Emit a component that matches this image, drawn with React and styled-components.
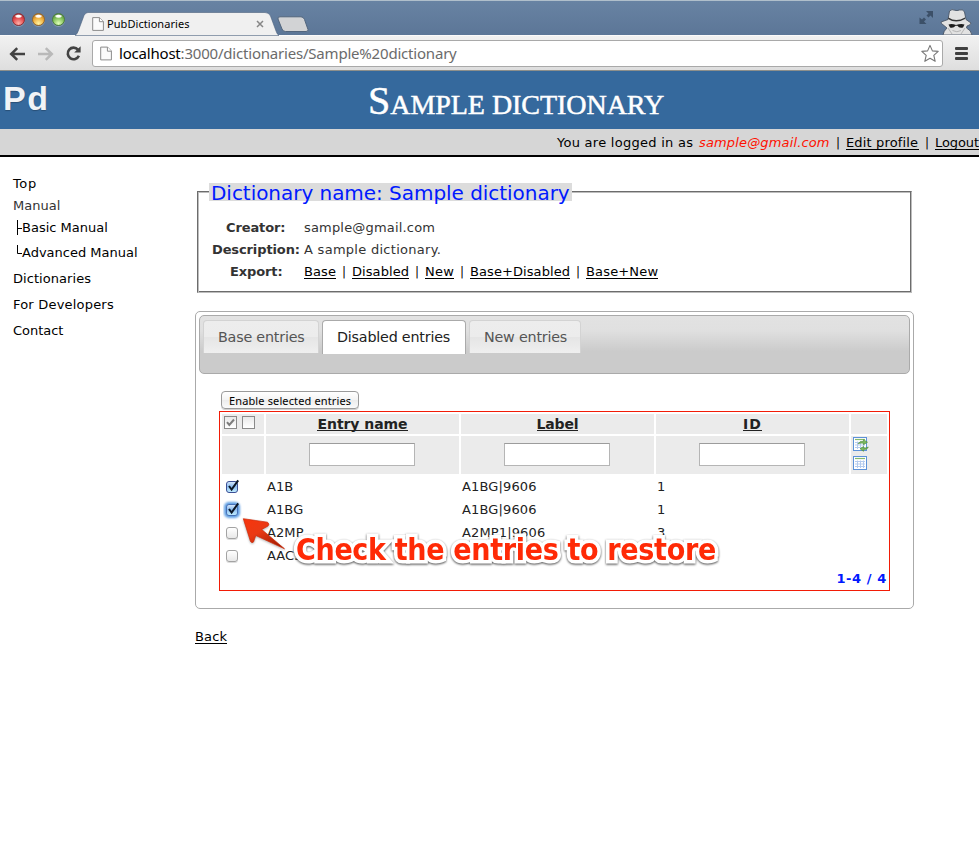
import React from "react";
import styled, { createGlobalStyle, css } from "styled-components";

const Global = createGlobalStyle`
  *, *::before, *::after { box-sizing: border-box; }
  html, body { margin: 0; padding: 0; background: #fff; }
  body {
    width: 979px;
    overflow: hidden;
    font-family: "DejaVu Sans", Verdana, sans-serif;
    font-size: 13px;
    color: #000;
  }
`;

/* ---------- text helpers ---------- */

const Label = styled.span`
  display: inline-block;
  width: ${(p) => p.$w}px;
  letter-spacing: ${(p) => p.$ls || 0}px;
  white-space: nowrap;
`;

const Link = styled(Label).attrs({ as: "a" })`
  color: #000;
  height: 15px;
  line-height: 16px;
  border-bottom: 1px solid #000;
`;

/* ---------- browser window ---------- */

const Window = styled.div`
  width: 979px;
  height: 855px;
  overflow: hidden;
  background: #fff;
`;

const TabStrip = styled.div`
  height: 35px;
  display: flex;
  align-items: flex-start;
  border-top: 1px solid #b0bfcb;
  background: linear-gradient(#6883a3, #5c7697);
`;

const Lights = styled.div`
  display: flex;
  gap: 7px;
  padding: 12px 0 0 12px;
  width: 75px;
`;

const Light = styled.span`
  flex: none;
  width: 13px;
  height: 13px;
  border-radius: 50%;
  border: 1px solid ${(p) => p.$edge};
  background: radial-gradient(ellipse 4px 2px at 50% 20%, #fff 50%, transparent 100%),
    radial-gradient(circle at 50% 85%, ${(p) => p.$glow} 0, ${(p) => p.$mid} 55%, ${(p) => p.$edge} 100%);
  box-shadow: 0 1px 0 rgba(255, 255, 255, 0.25);
`;

const BrowserTab = styled.div`
  position: relative;
  width: 204px;
  height: 34px;
`;

const TabShape = styled.svg`
  position: absolute;
  left: 0;
  top: 0;
`;

const TabBody = styled.div`
  position: relative;
  display: flex;
  align-items: center;
  padding: 12px 0 0 17px;
  height: 34px;
`;

const TabTitle = styled.span`
  width: 152px;
  padding-left: 3px;
  font: 11px/18px "Noto Sans", sans-serif;
  letter-spacing: 0.06px;
  margin-bottom: 1px;
`;

const StripSpacer = styled.div`
  flex: 1;
`;

const StripIcon = styled.svg`
  display: block;
  flex: none;
  margin: ${(p) => p.$m};
`;

const Toolbar = styled.div`
  height: 36px;
  display: flex;
  align-items: center;
  padding: 1px 11px 0 9px;
  background: linear-gradient(#f1f1f1, #dedede);
  border-bottom: 1px solid #8d8f8b;
  border-top: 1px solid #fafafa;
`;

const NavButton = styled.span`
  display: flex;
  width: ${(p) => p.$w}px;
`;

const AddressBar = styled.div`
  width: 851px;
  height: 27px;
  display: flex;
  align-items: center;
  padding: 0 2px 0 7px;
  border: 1px solid #a9a9a9;
  border-radius: 3px;
  background: #fff;
`;

const Url = styled.span`
  flex: 1;
  padding: 0 0 1px 7px;
  font: 15px/24px "Noto Sans", sans-serif;
  letter-spacing: -0.2px;
  color: #6b6b6b;
  b { font-weight: 400; color: #000; }
`;

const MenuLines = styled.div`
  display: grid;
  gap: 2px;
  width: 13px;
  margin-left: 12px;
  i { height: 3px; border-radius: 1px; background: #3f3f3f; }
`;

/* ---------- page header ---------- */

const Header = styled.header`
  height: 58px;
  display: flex;
  background: #35699d;
  color: #fff;
`;

const Logo = styled.div`
  width: 364px;
  padding: 7px 0 0 3px;
  font: bold 34px/40px "Liberation Sans", Arial, sans-serif;
  letter-spacing: 1.5px;
  color: #f1f3f6;
  text-shadow: 0 1px 1px rgba(0, 0, 0, 0.25);
`;

const Title = styled.h1`
  margin: 0;
  padding-top: 7px;
  padding-left: 4px;
  font: 28px/46px "Liberation Serif", "Times New Roman", serif;
  letter-spacing: -0.04px;
  white-space: nowrap;
  -webkit-text-stroke: 0.5px #fff;
  &::first-letter { font-size: 40px; }
`;

const UserBar = styled.div`
  height: 28px;
  display: flex;
  justify-content: flex-end;
  background: #d6d6d6;
  border-bottom: 2px solid #000;
  line-height: 16px;
  padding-top: 6px;
  white-space: nowrap;
`;

const Email = styled(Label)`
  font-style: italic;
  color: #f10;
`;

const Bar = styled.span`
  width: 16px;
  padding-left: 6px;
  font-size: 12px;
`;

/* ---------- page body ---------- */

const Body = styled.div`
  display: flex;
`;

const Sidebar = styled.nav`
  width: 195px;
  padding: 19px 0 0 13px;
  display: flex;
  flex-direction: column;
`;

const NavItem = styled.a`
  display: flex;
  height: ${(p) => p.$h}px;
  line-height: 16px;
  letter-spacing: ${(p) => p.$ls || 0}px;
  color: ${(p) => (p.$muted ? "#333" : "#000")};
`;

const Branch = styled.svg`
  margin-left: 3px;
  width: 6px;
  height: 16px;
`;

const Main = styled.main`
  width: 719px;
  padding-top: 26px;
`;

const InfoBox = styled.section`
  margin: 0 2px;
  display: flex;
  flex-direction: column;
`;

const LegendRow = styled.div`
  display: flex;
  height: 18px;
`;

const Rule = styled.div`
  width: ${(p) => p.$w};
  flex: ${(p) => (p.$w ? "none" : 1)};
  margin-top: 8px;
  height: 10px;
  border: 0 solid #6c6c6c;
  border-top-width: 1px;
  box-shadow: inset 0 1px 0 #bdbdbd;
  ${(p) => p.$side === "left" && css`border-left-width: 1px; box-shadow: inset 1px 1px 0 #bdbdbd;`}
  ${(p) => p.$side === "right" && css`border-right: 1px solid #bdbdbd; box-shadow: inset -1px 0 0 #6c6c6c, inset 0 1px 0 #bdbdbd;`}
`;

const Legend = styled.div`
  width: 363px;
  padding-left: 2px;
  background: #dcdcdc;
  color: #0019ff;
  font-size: 20px;
  line-height: 20px;
  letter-spacing: -0.04px;
  white-space: nowrap;
`;

const InfoBody = styled.div`
  height: 92px;
  padding: 19px 0 0 13px;
  border: 1px solid #6c6c6c;
  border-top: 0;
  border-right-color: #bdbdbd;
  border-bottom-color: #bdbdbd;
  box-shadow: inset 1px 0 0 #bdbdbd, inset -1px -1px 0 #6c6c6c;
`;

const InfoRow = styled.div`
  display: grid;
  grid-template-columns: 93px auto;
  height: 22px;
  line-height: 16px;
  color: #333;
`;

const Term = styled.b`
  padding-left: ${(p) => p.$pad}px;
  letter-spacing: -0.12px;
`;

const InlineLinks = styled.div`
  display: flex;
  color: #000;
`;

const Panel = styled.section`
  position: relative;
  height: 298px;
  margin-top: 18px;
  padding: 3px;
  border: 1px solid #aaa;
  border-radius: 5px;
`;

const TabBar = styled.div`
  height: 59px;
  display: flex;
  align-items: flex-start;
  gap: 3px;
  padding: 4px 3px;
  border: 1px solid #aaa;
  border-radius: 5px;
  background: linear-gradient(#e2e2e2 0, #e0e0e0 25%, #cbcbcb 62%, #cbcbcb 100%);
`;

const PanelTab = styled.div`
  width: ${(p) => p.$w}px;
  height: ${(p) => (p.$active ? 34 : 33)}px;
  padding: 7px 0 0 14px;
  border: 1px solid ${(p) => (p.$active ? "#aaa" : "#d3d3d3")};
  border-bottom: 0;
  border-radius: 4px 4px 0 0;
  background: ${(p) => (p.$active ? "#fff" : "linear-gradient(#ededed 0, #ececec 49%, #e5e5e5 51%, #efefef 100%)")};
  color: ${(p) => (p.$active ? "#212121" : "#555")};
  font-size: 14.3px;
  line-height: 18px;
  letter-spacing: -0.2px;
  white-space: nowrap;
`;

const PushButton = styled.button`
  display: block;
  width: 138px;
  height: 18px;
  margin: 17px 0 2px 22px;
  padding: 0 0 0 7px;
  border: 1px solid #9a9a9a;
  border-radius: 4px;
  background: linear-gradient(#fff, #f3f3f3 50%, #ececec 51%, #fafafa);
  box-shadow: 0 1px 0 #d0d0d0;
  font: 11px/15px "Noto Sans", sans-serif;
  letter-spacing: 0.13px;
  text-align: left;
  white-space: nowrap;
  color: #000;
`;

const Grid = styled.div`
  width: 671px;
  height: 180px;
  margin-left: 20px;
  padding: 2px;
  border: 1px solid #f21b06;
  color: #222;
`;

const GridRow = styled.div`
  display: grid;
  grid-template-columns: 42px 193px 193px 193px 36px;
  column-gap: 2px;
  height: ${(p) => p.$h}px;
  margin-bottom: ${(p) => p.$gap || 0}px;
`;

const HeadCell = styled.div`
  display: flex;
  background: #ebebeb;
  padding: ${(p) => p.$p || 0};
  gap: ${(p) => p.$gap || 0}px;
  justify-content: ${(p) => (p.$center ? "center" : "flex-start")};
  align-items: flex-start;
`;

const SortLink = styled.a`
  font-size: 14px;
  font-weight: bold;
  line-height: 16px;
  height: 15px;
  border-bottom: 1px solid #222;
  letter-spacing: ${(p) => p.$ls}px;
`;

const FilterInput = styled.input`
  width: 106px;
  height: 23px;
  margin-right: 1px;
  border: 1px solid #b5b5b5;
  border-top-color: #9c9c9c;
  background: #fff;
  outline: 0;
`;

const ToggleAll = styled.span`
  display: flex;
  width: 13px;
  height: 13px;
  border: 1px solid #8a8a8a;
  background: linear-gradient(#e9e9e9, #fff);
`;

const Cell = styled.div`
  padding: 5px 0 0 1px;
  line-height: 16px;
  letter-spacing: ${(p) => p.$ls || 0.1}px;
`;

const CheckCell = styled.div`
  padding: ${(p) => (p.$on ? 3 : 7)}px 0 0 ${(p) => (p.$on ? 1 : 4)}px;
`;

const EmptyCheck = styled.span`
  display: block;
  width: 12px;
  height: 12px;
  border: 1px solid #a3a3a3;
  border-radius: 3px;
  background: linear-gradient(#fff, #e8e8e8);
  box-shadow: 0 1px 0 #ddd;
`;

const IconStack = styled.div`
  display: grid;
  gap: 2px;
  padding-left: 1px;
`;

const Count = styled.div`
  padding: 5px 0 0;
  text-align: right;
  font-weight: bold;
  line-height: 16px;
  color: #0019ff;
  letter-spacing: 0.6px;
`;

const Arrow = styled.svg`
  position: absolute;
  left: 44px;
  top: 202px;
  filter: drop-shadow(0 1px 1px rgba(0, 0, 0, 0.3));
`;

const Callout = styled.div`
  position: absolute;
  left: 100px;
  top: 219px;
  white-space: nowrap;
  font: bold 30px/38px "DejaVu Sans Condensed", "DejaVu Sans", sans-serif;
  letter-spacing: -0.32px;
  color: #ff2a06;
  -webkit-text-stroke: 7px #fff;
  paint-order: stroke fill;
  stroke-linejoin: round;
  filter: drop-shadow(0 1px 0.8px rgba(0, 0, 0, 0.7));
`;

const BackRow = styled.div`
  display: flex;
  margin-top: 20px;
`;

/* ---------- icons ---------- */

const PageIcon = ({ w, h }) => (
  <svg width={w} height={h} viewBox="0 0 12 14">
    <path d="M.7.6H7.6L11.4 4.5V13.4H.7Z" fill="#fbfbfb" stroke="#8c8c8c" strokeWidth="1" />
    <path d="M7.4.6V4.7H11.4" fill="#fff" stroke="#8c8c8c" strokeWidth="1" />
  </svg>
);

const ArrowIcon = ({ color, flip }) => (
  <svg width="17" height="14" viewBox="0 0 17 14">
    <path
      d="M8.2 1.2 2.2 7 8.2 12.8M2.5 7H16"
      transform={flip ? "translate(17 0) scale(-1 1)" : undefined}
      fill="none"
      stroke={color}
      strokeWidth="2.5"
    />
  </svg>
);

const ReloadIcon = () => (
  <svg width="17" height="17" viewBox="0 0 17 17">
    <path d="M13 4.7A5.8 5.8 0 1 0 13.9 10.8" fill="none" stroke="#434343" strokeWidth="2.6" />
    <path d="M15.6 1.2V7.4H9.2Z" fill="#434343" />
  </svg>
);

const StarIcon = () => (
  <svg width="20" height="19" viewBox="0 0 20 19">
    <path
      d="M10 1.4 12.4 6.9 18.2 7.4 13.8 11.4 15.2 17.3 10 14.2 4.8 17.3 6.2 11.4 1.8 7.4 7.6 6.9Z"
      fill="#fff"
      stroke="#777"
      strokeWidth="1.1"
      strokeLinejoin="round"
    />
  </svg>
);

const Incognito = () => (
  <StripIcon $m="7px 6px 0 6px" width="33" height="27" viewBox="0 0 33 27">
    <path
      d="M9.5 3Q12 .6 14.5 2.2Q17 3 19.5 2Q23 .8 24.5 4L26 11.5 31 15Q31 17 27 18L26.5 20Q31 22 32 27H3Q3.500 23 7 20L1.500 15.500 1 14 8 11.500Z"
      fill="#e2e2e2"
      stroke="#4a5666"
      strokeWidth=".9"
    />
    <path d="M8.500 9.500Q16 14.500 25 9.500V11Q16 16 8 11Z" fill="#353535" />
    <path d="M8.500 16.500Q12 15.500 16 17 21 15.500 24.500 16.500L23 19.500Q19 20.500 17.500 17.800H15.500Q13.500 20.500 10 19.500Z" fill="#1e1e1e" />
    <path d="M8 20 12 26M25 20 21 26M12.500 22.500Q17 25 21 22.500" fill="none" stroke="#b5b5b5" />
  </StripIcon>
);

const CheckedBox = ({ focused }) => (
  <svg width="20" height="20" viewBox="0 0 20 20">
    <defs>
      <linearGradient id="aqua" x1="0" y1="0" x2="0" y2="1">
        <stop offset="0" stopColor="#dcebfb" />
        <stop offset=".45" stopColor="#8cbcf0" />
        <stop offset="1" stopColor="#c4f0ff" />
      </linearGradient>
      <filter id="glow"><feGaussianBlur stdDeviation=".8" /></filter>
    </defs>
    {focused && <rect x="1" y="2" width="16" height="16" rx="5" fill="#5f9fe3" filter="url(#glow)" />}
    <rect x="3.500" y="4.500" width="11" height="11" rx="2.500" fill="url(#aqua)" stroke={focused ? "#4770b5" : "#3c4f95"} />
    <path d="M6 9 8.600 12.500 15.200 3.400" fill="none" stroke="#0b1626" strokeWidth="2" />
  </svg>
);

const TableIcon = ({ refresh }) => (
  <svg width="17" height="17" viewBox="0 0 17 17">
    <rect x="1.500" y="1.500" width="13" height="13" fill="#fff" stroke="#5d92d8" />
    <path d="M3 3.500H13" stroke="#85b96d" strokeWidth="1.200" />
    <path d="M3 6.500H13M3 9H13M3 11.500H13M5.500 5.500V13M8.500 5.500V13M11.500 5.500V13" stroke="#b4cbee" />
    {refresh && (
      <g fill="#7cb860" stroke="#4a8a35" strokeWidth=".6">
        <path d="M6 7.800Q7.500 4.800 11.500 5.200V3.700L15.500 6.200 11.500 8.700V7.200Q8 6.800 6 7.800Z" />
        <path d="M16.300 11Q15.300 13.800 11.500 13.600V15.300L8 12.800 11.500 10.500V12Q14 12.300 16.300 11Z" />
      </g>
    )}
  </svg>
);

/* ---------- data ---------- */

const NAV = [
  { text: "Top", h: 22, ls: 0.6 },
  { text: "Manual", h: 22, muted: true },
  { text: "Basic Manual", h: 25, branch: "M1.500 0V15M1.500 8.500H6" },
  { text: "Advanced Manual", h: 26, branch: "M1.500 0V8.500H6" },
  { text: "Dictionaries", h: 26, ls: 0.06 },
  { text: "For Developers", h: 26, ls: 0.2 },
  { text: "Contact", h: 26, ls: -0.03 },
];

const EXPORTS = [
  ["Base", 32, 0.11],
  ["Disabled", 57, 0.07],
  ["New", 29, 0.3],
  ["Base+Disabled", 100, 0.08],
  ["Base+New", 72, 0.16],
];

const ROWS = [
  ["A1B", "A1BG|9606", "1", "on"],
  ["A1BG", "A1BG|9606", "1", "focused"],
  ["A2MP", "A2MP1|9606", "3", null],
  ["AACS", "", "", null],
];

export default function App() {
  return (
    <Window>
      <Global />
      <TabStrip>
        <Lights>
          <Light $edge="#8e2f35" $mid="#e2474a" $glow="#ffb0a8" />
          <Light $edge="#97672a" $mid="#eda936" $glow="#fff3a0" />
          <Light $edge="#4c7d3e" $mid="#7fbe56" $glow="#e0ffb8" />
        </Lights>
        <BrowserTab>
          <TabShape width="204" height="35" viewBox="0 0 204 35">
            <path
              d="M0 34.500Q2.500 33 4 28L9 14.500Q10.500 11.500 13 11.500H190Q194 11.500 195.500 15L201 30Q202 33.500 204 34.500Z"
              fill="#f0f0f0"
              stroke="#4b627e"
              strokeWidth=".6"
            />
          </TabShape>
          <TabBody>
            <PageIcon w={12} h={14} />
            <TabTitle>PubDictionaries</TabTitle>
            <svg width="8" height="8" viewBox="0 0 8 8">
              <path d="M1 1 7 7M7 1 1 7" stroke="#868686" strokeWidth="1.500" />
            </svg>
          </TabBody>
        </BrowserTab>
        <StripIcon $m="15px 0 0 -2px" width="33" height="17" viewBox="0 0 33 17">
          <path d="M3 .8H24Q26.500 .8 27.500 3.500L31 13.500Q31.500 15.500 29 15.500H8.500Q6 15.500 5 13L1 3Q.500 .8 3 .8Z" fill="#d2d3d5" stroke="#52657d" />
        </StripIcon>
        <StripSpacer />
        <StripIcon $m="9px 0 0" width="15" height="15" viewBox="0 0 15 15">
          <path d="M7 1H14V8L11.500 5.500 9.500 7.500 7.500 5.500 9.500 3.500ZM.500 7.500 3 9.500 5 7.500 7 9.500 5 11.500 7.500 14H.500Z" fill="#3c5068" />
        </StripIcon>
        <Incognito />
      </TabStrip>

      <Toolbar>
        <NavButton $w={28}><ArrowIcon color="#434343" /></NavButton>
        <NavButton $w={28}><ArrowIcon color="#b9b9b9" flip /></NavButton>
        <NavButton $w={27}><ReloadIcon /></NavButton>
        <AddressBar>
          <PageIcon w={12} h={15} />
          <Url><b>localhost</b>:3000/dictionaries/Sample%20dictionary</Url>
          <StarIcon />
        </AddressBar>
        <MenuLines><i /><i /><i /></MenuLines>
      </Toolbar>

      <Header>
        <Logo>Pd</Logo>
        <Title>SAMPLE DICTIONARY</Title>
      </Header>
      <UserBar>
        <Label $w={142} $ls={0.27}>You are logged in as</Label>
        <Email $w={131} $ls={0.15}>sample@gmail.com</Email>
        <Bar>|</Bar>
        <Link $w={73} $ls={0.15}>Edit profile</Link>
        <Bar>|</Bar>
        <Link $w={44} $ls={-0.1}>Logout</Link>
      </UserBar>

      <Body>
        <Sidebar>
          {NAV.map((n) => (
            <NavItem key={n.text} $h={n.h} $ls={n.ls} $muted={n.muted}>
              {n.branch && <Branch><path d={n.branch} fill="none" stroke="#000" strokeWidth="1" /></Branch>}
              {n.text}
            </NavItem>
          ))}
        </Sidebar>
        <Main>
          <InfoBox>
            <LegendRow>
              <Rule $side="left" $w="12px" />
              <Legend>Dictionary name: Sample dictionary</Legend>
              <Rule $side="right" />
            </LegendRow>
            <InfoBody>
              <InfoRow><Term $pad={15}>Creator:</Term><Label $ls={0.18}>sample@gmail.com</Label></InfoRow>
              <InfoRow><Term $pad={1}>Description:</Term><Label $ls={0.28}>A sample dictionary.</Label></InfoRow>
              <InfoRow>
                <Term $pad={19}>Export:</Term>
                <InlineLinks>
                  {EXPORTS.map(([text, w, ls], i) => (
                    <React.Fragment key={text}>
                      {i > 0 && <Bar>|</Bar>}
                      <Link $w={w} $ls={ls}>{text}</Link>
                    </React.Fragment>
                  ))}
                </InlineLinks>
              </InfoRow>
            </InfoBody>
          </InfoBox>

          <Panel>
            <TabBar>
              <PanelTab $w={116}>Base entries</PanelTab>
              <PanelTab $w={144} $active>Disabled entries</PanelTab>
              <PanelTab $w={112}>New entries</PanelTab>
            </TabBar>
            <PushButton>Enable selected entries</PushButton>
            <Grid>
              <GridRow $h={20} $gap={2}>
                <HeadCell $p="2px 0 0 2px" $gap={5}>
                  <ToggleAll>
                    <svg width="11" height="11" viewBox="0 0 11 11">
                      <path d="M2 5.200 4.300 8 9 2.500" fill="none" stroke="#7d7d7d" strokeWidth="2" />
                    </svg>
                  </ToggleAll>
                  <ToggleAll />
                </HeadCell>
                <HeadCell $center $p="2px 0 0"><SortLink $ls={-0.06}>Entry name</SortLink></HeadCell>
                <HeadCell $center $p="2px 0 0"><SortLink $ls={-0.15}>Label</SortLink></HeadCell>
                <HeadCell $center $p="2px 0 0"><SortLink $ls={1.2}>ID</SortLink></HeadCell>
                <HeadCell />
              </GridRow>
              <GridRow $h={38}>
                <HeadCell />
                <HeadCell $center $p="7px 0 0"><FilterInput /></HeadCell>
                <HeadCell $center $p="7px 0 0"><FilterInput /></HeadCell>
                <HeadCell $center $p="7px 0 0"><FilterInput /></HeadCell>
                <HeadCell>
                  <IconStack><TableIcon refresh /><TableIcon /></IconStack>
                </HeadCell>
              </GridRow>
              {ROWS.map(([name, label, id, state]) => (
                <GridRow key={name} $h={23}>
                  <CheckCell $on={!!state}>
                    {state ? <CheckedBox focused={state === "focused"} /> : <EmptyCheck />}
                  </CheckCell>
                  <Cell>{name}</Cell>
                  <Cell $ls={0.14}>{label}</Cell>
                  <Cell>{id}</Cell>
                </GridRow>
              ))}
              <Count>1-4 / 4</Count>
            </Grid>
            <Arrow width="50" height="40" viewBox="0 0 50 40">
              <defs>
                <linearGradient id="arrow" x1="0" y1="0" x2=".8" y2="1">
                  <stop offset="0" stopColor="#f8340c" />
                  <stop offset=".45" stopColor="#ea3a14" />
                  <stop offset="1" stopColor="#a01a00" />
                </linearGradient>
              </defs>
              <path
                d="M3.300 4.700 27.500 8.200Q30 10.200 28 12L21.700 15.500 44.500 34.800 15.800 21.500 13.500 28Q12 29.500 10.500 27.500Z"
                fill="url(#arrow)"
                stroke="#cf2a08"
                strokeWidth=".7"
                strokeLinejoin="round"
              />
            </Arrow>
            <Callout>Check the entries to restore</Callout>
          </Panel>
          <BackRow><Link $w={32} $ls={0.15}>Back</Link></BackRow>
        </Main>
      </Body>
    </Window>
  );
}
